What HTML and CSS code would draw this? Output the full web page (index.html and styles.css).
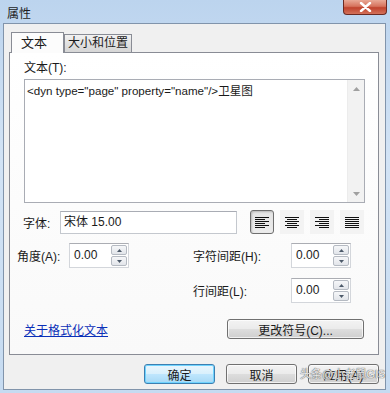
FILE: index.html
```html
<!DOCTYPE html>
<html lang="zh-CN">
<head>
    <meta charset="UTF-8">
    <meta name="viewport" content="width=device-width, initial-scale=1.0">
    <title>属性</title>
    <link rel="stylesheet" href="styles.css">
</head>
<body>
    <div class="window">
        <div class="titlebar">
            <span class="title">属性</span>
            <div class="close">
                <svg width="13" height="10" viewBox="0 0 13 10">
                    <path d="M2 1 L11 9 M11 1 L2 9" stroke="#fff" stroke-width="2.4" stroke-linecap="round"/>
                </svg>
            </div>
        </div>

        <div class="client">
            <div class="tabs">
                <div class="tab active">文本</div>
                <div class="tab">大小和位置</div>
            </div>

            <div class="panel">
                <div class="label">文本(T):</div>
                <div class="textbox">
                    <div class="text">&lt;dyn type="page" property="name"/&gt;卫星图</div>
                    <div class="vscroll">
                        <svg width="7" height="4" viewBox="0 0 7 4"><path d="M0 4 L3.5 0 L7 4 Z" fill="#a0a0a0"/></svg>
                        <svg width="7" height="4" viewBox="0 0 7 4"><path d="M0 0 L3.5 4 L7 0 Z" fill="#a0a0a0"/></svg>
                    </div>
                </div>

                <div class="font-row">
                    <span class="font-label">字体:</span>
                    <div class="font-box">宋体 15.00</div>
                    <div class="align-group">
                        <div class="align-btn pressed">
                            <svg width="14" height="11" viewBox="0 0 14 11">
                                <path d="M0 0.5H14 M0 2.5H10 M0 4.5H14 M0 6.5H10 M0 8.5H14 M0 10.5H10" stroke="#111" stroke-width="1"/>
                            </svg>
                        </div>
                        <div class="align-btn">
                            <svg width="14" height="11" viewBox="0 0 14 11">
                                <path d="M0 0.5H14 M2 2.5H12 M0 4.5H14 M2 6.5H12 M0 8.5H14 M2 10.5H12" stroke="#111" stroke-width="1"/>
                            </svg>
                        </div>
                        <div class="align-btn">
                            <svg width="14" height="11" viewBox="0 0 14 11">
                                <path d="M0 0.5H14 M4 2.5H14 M0 4.5H14 M4 6.5H14 M0 8.5H14 M4 10.5H14" stroke="#111" stroke-width="1"/>
                            </svg>
                        </div>
                        <div class="align-btn">
                            <svg width="14" height="11" viewBox="0 0 14 11">
                                <path d="M0 0.5H14 M0 2.5H14 M0 4.5H14 M0 6.5H14 M0 8.5H14 M0 10.5H14" stroke="#111" stroke-width="1"/>
                            </svg>
                        </div>
                    </div>
                </div>

                <div class="spin-grid">
                    <span class="spin-label">角度(A):</span>
                    <div class="spin">
                        <span class="spin-value">0.00</span>
                        <div class="spin-btns">
                            <div class="spin-btn"><svg width="5" height="3" viewBox="0 0 5 3"><path d="M0 3 L2.5 0 L5 3 Z" fill="#4d5a6a"/></svg></div>
                            <div class="spin-btn"><svg width="5" height="3" viewBox="0 0 5 3"><path d="M0 0 L2.5 3 L5 0 Z" fill="#4d5a6a"/></svg></div>
                        </div>
                    </div>
                    <span></span>
                    <span class="spin-label">字符间距(H):</span>
                    <div class="spin">
                        <span class="spin-value">0.00</span>
                        <div class="spin-btns">
                            <div class="spin-btn"><svg width="5" height="3" viewBox="0 0 5 3"><path d="M0 3 L2.5 0 L5 3 Z" fill="#4d5a6a"/></svg></div>
                            <div class="spin-btn"><svg width="5" height="3" viewBox="0 0 5 3"><path d="M0 0 L2.5 3 L5 0 Z" fill="#4d5a6a"/></svg></div>
                        </div>
                    </div>

                    <span></span>
                    <span></span>
                    <span></span>
                    <span class="spin-label">行间距(L):</span>
                    <div class="spin">
                        <span class="spin-value">0.00</span>
                        <div class="spin-btns">
                            <div class="spin-btn"><svg width="5" height="3" viewBox="0 0 5 3"><path d="M0 3 L2.5 0 L5 3 Z" fill="#4d5a6a"/></svg></div>
                            <div class="spin-btn"><svg width="5" height="3" viewBox="0 0 5 3"><path d="M0 0 L2.5 3 L5 0 Z" fill="#4d5a6a"/></svg></div>
                        </div>
                    </div>
                </div>

                <div class="link-row">
                    <a class="link" href="#">关于格式化文本</a>
                    <button class="btn wide">更改符号(C)...</button>
                </div>
            </div>

            <div class="buttons">
                <button class="btn default">确定</button>
                <button class="btn">取消</button>
                <button class="btn">应用(A)</button>
            </div>
        </div>

        <span class="watermark">头条@小老鼠GIS</span>
    </div>
</body>
</html>
```

FILE: styles.css
```css
body {
    margin: 0;
    font-family: "Liberation Sans", "Noto Sans CJK SC", sans-serif;
    font-size: 12px;
    color: #1a1a1a;
}
.window {
    position: relative;
    width: 390px;
    height: 393px;
    display: flex;
    flex-direction: column;
    background: linear-gradient(180deg, #bcd4ee 0%, #d2e3f5 40%, #c6dbf1 100%);
    overflow: hidden;
}
.titlebar {
    height: 23px;
    display: flex;
    justify-content: space-between;
    align-items: flex-start;
}
.title {
    margin: 4px 0 0 7px;
    font-size: 12px;
    color: #1e1e1e;
}
.close {
    width: 44px;
    height: 15px;
    margin-right: 3px;
    box-sizing: border-box;
    border: 1px solid #6b2a22;
    border-top: none;
    border-radius: 0 0 4px 4px;
    background: linear-gradient(180deg, #e9a996 0%, #d6735d 45%, #c0432d 55%, #d3715a 100%);
    display: flex;
    align-items: center;
    justify-content: center;
}
.client {
    flex: 1;
    margin: 0 4px 3px 3px;
    border: 1px solid #8194ab;
    background-color: #f0f0f0;
    padding: 8px 6px 0 5px;
    display: flex;
    flex-direction: column;
}
.tabs {
    display: flex;
    align-items: flex-end;
    height: 20px;
    margin-left: 2px;
}
.tab {
    box-sizing: border-box;
    height: 18px;
    width: 68px;
    padding-left: 3px;
    border: 1px solid #898c95;
    border-bottom: none;
    background: linear-gradient(180deg, #f2f2f2 0%, #e2e2e2 50%, #d6d6d6 100%);
    font-size: 12px;
    line-height: 17px;
    white-space: nowrap;
}
.tab.active {
    width: 53px;
    height: 21px;
    margin-bottom: -1px;
    padding-left: 9px;
    background: #fcfcfc;
    position: relative;
    z-index: 1;
    font-size: 13px;
    line-height: 20px;
}
.panel {
    box-sizing: border-box;
    height: 303px;
    border: 1px solid #898c95;
    background: linear-gradient(180deg, #ffffff 0%, #f9f9f9 100%);
    padding: 8px 13px 0 14px;
}
.label {
    line-height: 15px;
}
.textbox {
    margin-top: 3px;
    height: 124px;
    box-sizing: border-box;
    border: 1px solid #a9acb4;
    background: #fff;
    display: flex;
}
.text {
    flex: 1;
    padding: 3px 2px;
    line-height: 15px;
    font-size: 11.6px;
}
.vscroll {
    width: 16px;
    background: #f2f2f2;
    border-left: 1px solid #ececec;
    display: flex;
    flex-direction: column;
    justify-content: space-between;
    align-items: center;
    padding: 7px 0 6px;
}
.font-row {
    margin-top: 7px;
    height: 24px;
    display: flex;
    align-items: center;
}
.font-label {
    width: 37px;
    margin-left: -1px;
}
.font-box {
    box-sizing: border-box;
    width: 177px;
    height: 23px;
    border: 1px solid #c4c8ce;
    border-top-color: #a9acb4;
    background: #fff;
    padding-left: 3px;
    line-height: 20px;
}
.align-group {
    display: flex;
    gap: 6px;
    margin-left: 13px;
}
.align-btn {
    box-sizing: border-box;
    width: 24px;
    height: 24px;
    background: #f3f3f3;
    display: flex;
    align-items: center;
    justify-content: center;
}
.align-btn.pressed {
    border: 1px solid #6f6f6f;
    border-radius: 3px;
    background: linear-gradient(180deg, #e4e4e4 0%, #ececec 100%);
    box-shadow: inset 1px 1px 2px rgba(0,0,0,0.2);
}
.spin-grid {
    margin-top: 9px;
    margin-left: -7px;
    display: grid;
    grid-template-columns: 52px 60px 64px 98px 60px;
    grid-auto-rows: 25px;
    row-gap: 10px;
    align-items: center;
}
.spin {
    box-sizing: border-box;
    height: 25px;
    border: 1px solid #d3d6db;
    border-top-color: #abadb3;
    background: #fff;
    display: flex;
    align-items: center;
}
.spin-value {
    flex: 1;
    padding-left: 4px;
    padding-bottom: 2px;
}
.spin-btns {
    display: flex;
    flex-direction: column;
    gap: 1px;
    margin-right: 1px;
}
.spin-btn {
    box-sizing: border-box;
    width: 16px;
    height: 10px;
    border: 1px solid #b5bac2;
    border-radius: 2px;
    background: linear-gradient(180deg, #f6f7f9 0%, #e2e5ea 100%);
    display: flex;
    align-items: center;
    justify-content: center;
}
.link-row {
    margin-top: 16px;
    display: flex;
    align-items: center;
    justify-content: space-between;
}
.link {
    color: #0a2fb8;
    text-decoration: underline;
}
.btn {
    box-sizing: border-box;
    width: 71px;
    height: 20px;
    padding: 0;
    border: 1px solid #707070;
    border-radius: 3px;
    background: linear-gradient(180deg, #f3f3f3 0%, #ebebeb 48%, #dddddd 52%, #cfcfcf 100%);
    font-family: "Liberation Sans", "Noto Sans CJK SC", sans-serif;
    font-size: 12px;
    color: #1a1a1a;
    box-shadow: inset 0 0 0 1px rgba(255,255,255,0.7);
}
.btn.wide {
    width: 137px;
    margin-right: 1px;
}
.btn.default {
    border-color: #3c7fb1;
    background: linear-gradient(180deg, #eaf6fd 0%, #d9f0fc 48%, #bee6fd 52%, #a7d9f5 100%);
    box-shadow: inset 0 0 0 1px #6fd3fe;
}
.buttons {
    margin-top: 9px;
    display: flex;
    justify-content: flex-end;
    gap: 11px;
}
.watermark {
    position: absolute;
    left: 300px;
    top: 367px;
    font-size: 11px;
    line-height: 15px;
    white-space: nowrap;
    color: rgba(255,255,255,0.9);
    text-shadow: 0 0 1px #555, 0 0 1px #555;
}
```
